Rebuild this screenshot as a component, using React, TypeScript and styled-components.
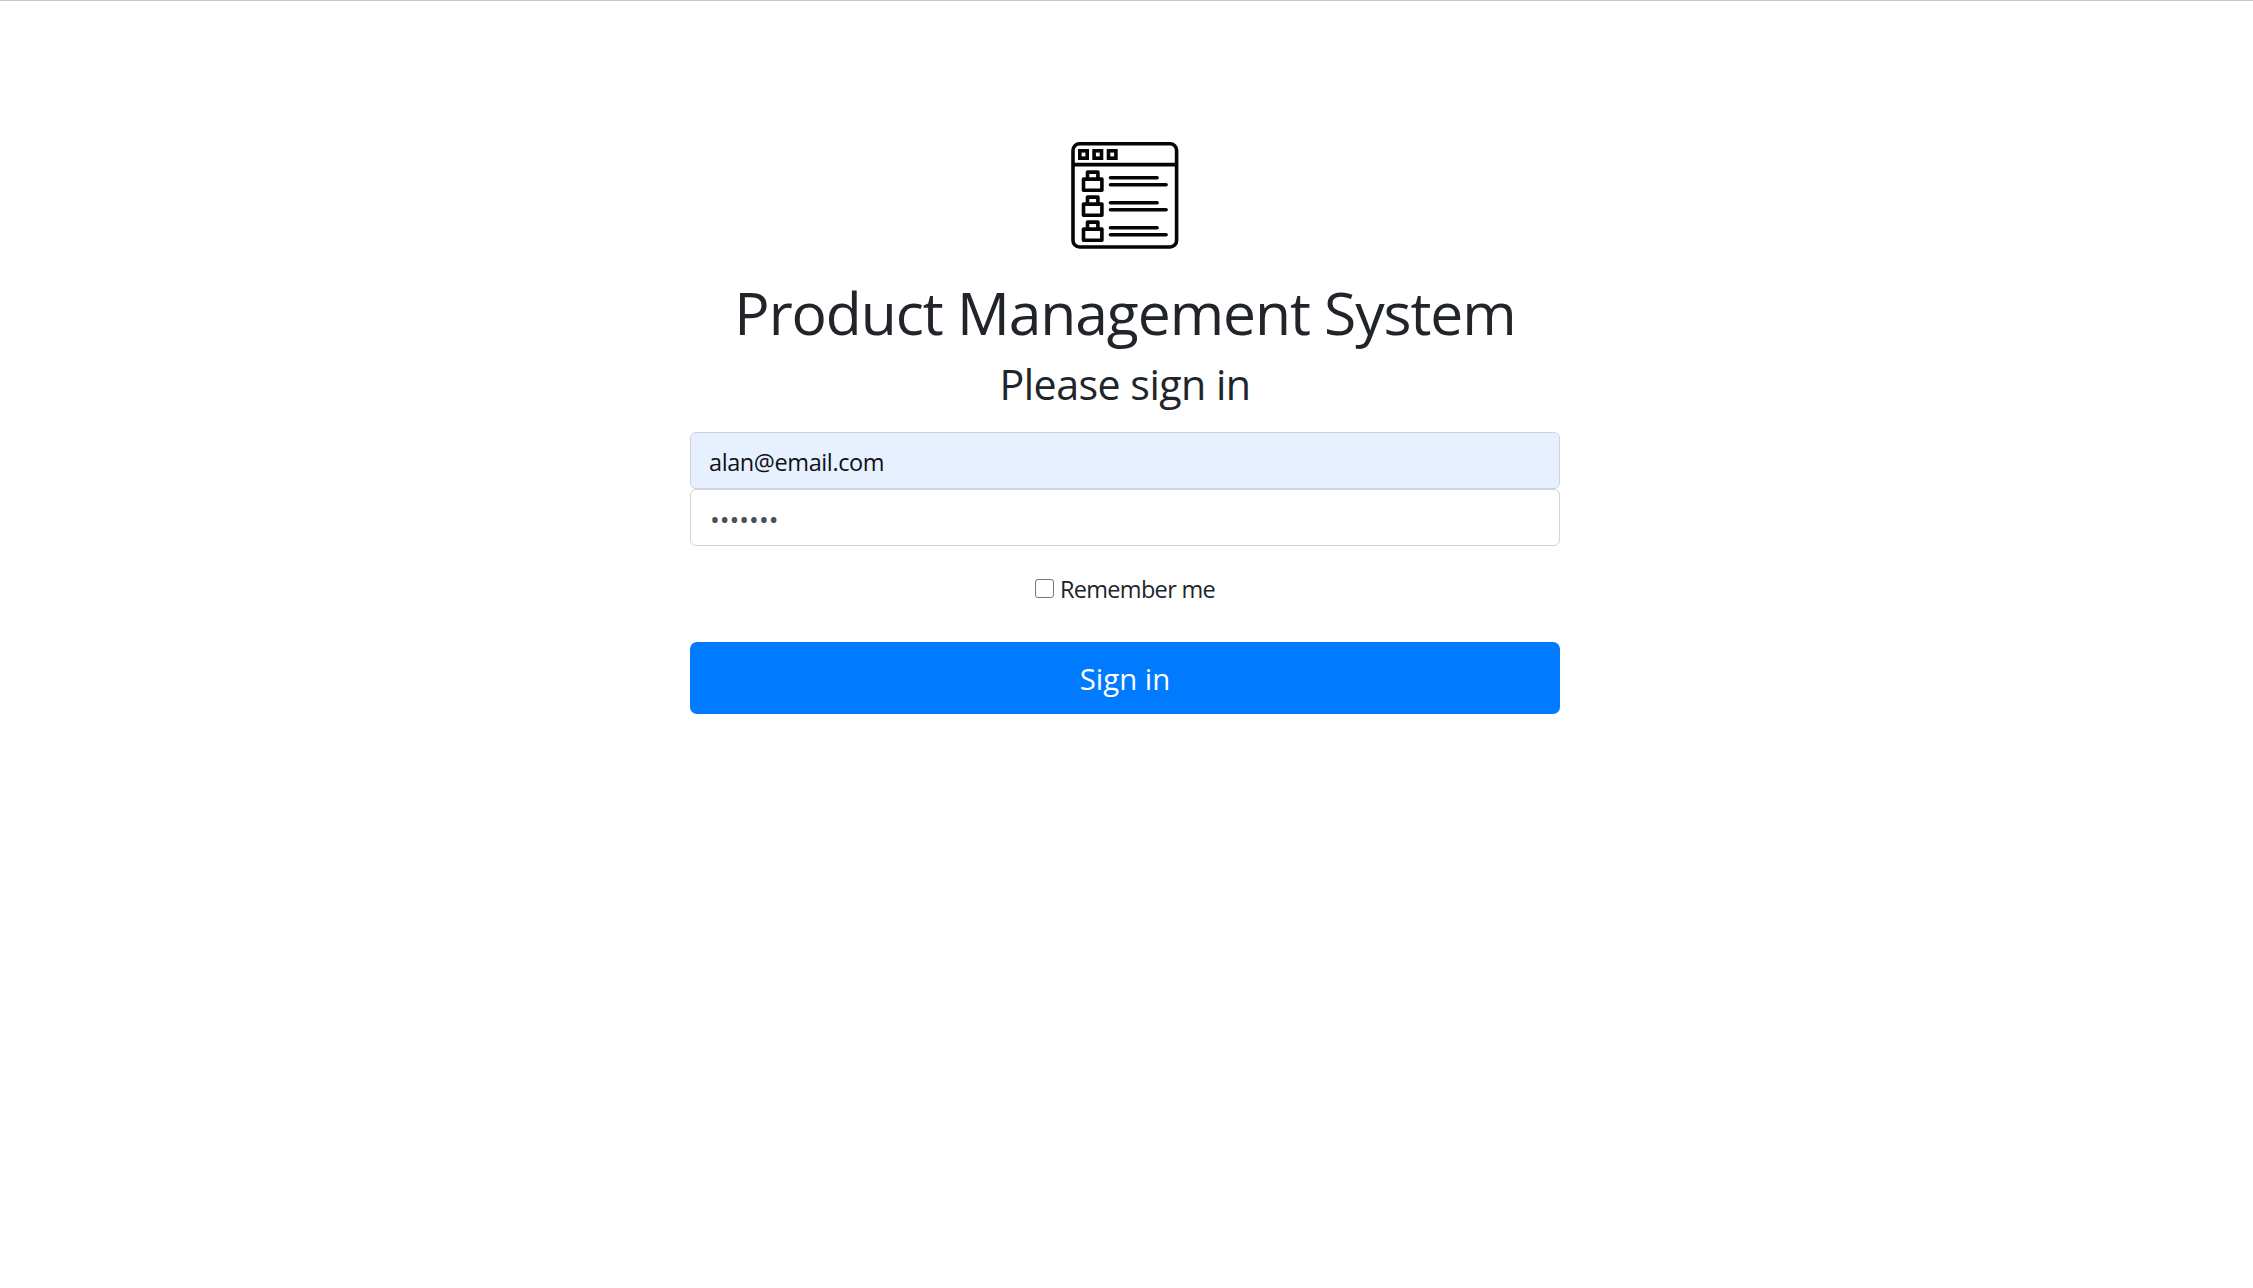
import React from "react";
import styled, { createGlobalStyle } from "styled-components";

const GlobalStyle = createGlobalStyle`
  *, *::before, *::after { box-sizing: border-box; }
  body {
    margin: 0;
    background: #fff;
    color: #212529;
    font-family: "Open Sans", "Noto Sans", sans-serif;
    font-size: 23.5px;
    line-height: 36px;
  }
`;

const Page = styled.main`
  display: flex;
  justify-content: center;
  min-height: 1288px;
  padding: 141px 3px 0 0;
  border-top: 1px solid #c6c6c6;
`;

const Form = styled.form`
  display: flex;
  flex-direction: column;
  align-items: center;
  width: 870px;
`;

const Logo = styled.svg`
  display: block;
  width: 108px;
  height: 108px;
`;

const Title = styled.h1`
  margin: 26px 0 11px;
  font-size: 58.8px;
  font-weight: 400;
  line-height: 72px;
  letter-spacing: -1.08px;
  white-space: nowrap;
`;

const Subtitle = styled.h2`
  margin: 0 0 23px;
  font-size: 41.2px;
  font-weight: 400;
  line-height: 50px;
  letter-spacing: -0.55px;
`;

const Field = styled.input<{ $filled?: boolean }>`
  display: block;
  width: 100%;
  height: 57px;
  margin: 0;
  padding: ${(p) => (p.$filled ? "3px 19px 0 18px" : "2px 19px 0")};
  border: 1px solid #ced4da;
  border-radius: 6px;
  outline: none;
  background: ${(p) => (p.$filled ? "#e6f0ff" : "#fff")};
  color: ${(p) => (p.$filled ? "#101114" : "#495057")};
  font-family: inherit;
  font-size: ${(p) => (p.$filled ? "23.5px" : "26px")};
  letter-spacing: ${(p) => (p.$filled ? "-0.4px" : "0")};
`;

const Remember = styled.label`
  display: flex;
  align-items: center;
  gap: 6px;
  height: 36px;
  margin: 24px 0 36px;
  letter-spacing: -0.68px;
`;

const RememberText = styled.span`
  padding-top: 2px;
`;

const Checkbox = styled.input`
  appearance: none;
  width: 19px;
  height: 19px;
  margin: 0;
  border: 1px solid #767676;
  border-radius: 3px;
  background: #fff;
`;

const Submit = styled.button`
  width: 100%;
  height: 72px;
  padding: 1px 0 0;
  border: 0;
  border-radius: 7px;
  background: #007bff;
  color: #fff;
  font-family: inherit;
  font-size: 29.4px;
`;

const rows = [0, 25, 50];

export default function App() {
  return (
    <>
      <GlobalStyle />
      <Page>
        <Form onSubmit={(e) => e.preventDefault()}>
          <Logo viewBox="0.5 0.5 108 108" fill="none" stroke="#050505" strokeWidth="3.6">
            <rect x="2.5" y="2.3" width="103.6" height="103.2" rx="6.5" />
            <path d="M2 23.1H106" />
            {[9.3, 23.6, 38].map((x) => (
              <rect key={x} x={x} y="9.3" width="7.4" height="7.4" />
            ))}
            {rows.map((y) => (
              <g key={y} transform={`translate(0 ${y})`}>
                <path d="M13 37.6H31.4V48.7H13ZM17 37.4V30.6H27.4V37.4" strokeLinejoin="round" />
                <path d="M40 36.2H86.6M40 43.2H95.6" strokeLinecap="round" />
              </g>
            ))}
          </Logo>
          <Title>Product Management System</Title>
          <Subtitle>Please sign in</Subtitle>
          <Field $filled type="email" aria-label="Email" defaultValue="alan@email.com" />
          <Field type="password" aria-label="Password" defaultValue="1234567" />
          <Remember>
            <Checkbox type="checkbox" />
            <RememberText>Remember me</RememberText>
          </Remember>
          <Submit type="submit">Sign in</Submit>
        </Form>
      </Page>
    </>
  );
}
